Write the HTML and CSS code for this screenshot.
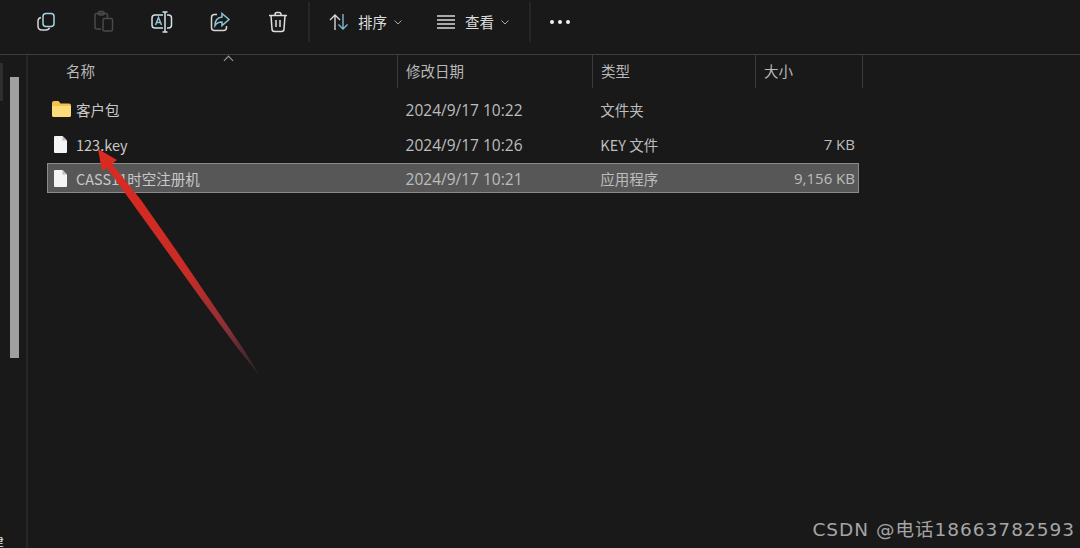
FILE: index.html
```html
<!DOCTYPE html>
<html lang="zh-CN">
<head>
    <meta charset="UTF-8">
    <title>文件资源管理器</title>
    <link rel="stylesheet" href="styles.css">
</head>
<body>
    <div class="toolbar">
        <div class="tool-group">
            <button class="tool-icon">
                <svg width="22" height="22" viewBox="0 0 22 22" fill="none" stroke="#d6d6d6" stroke-width="1.500">
                    <rect x="8" y="2.500" width="11" height="13" rx="3" stroke="#a9d2e4"/>
                    <path d="M6 6.500c-2 .4-3 1.600-3 3.500v5c0 2.500 1.500 4 4 4h4c1.700 0 3-.8 3.500-2.200"/>
                </svg>
            </button>
            <button class="tool-icon">
                <svg width="22" height="24" viewBox="0 0 22 24" fill="none" stroke="#4a4a4a" stroke-width="1.500">
                    <path d="M8 19H3.500A1.500 1.500 0 0 1 2 17.500V5a1.500 1.500 0 0 1 1.500-1.500H13A1.500 1.500 0 0 1 14.500 5v3"/>
                    <rect x="5.500" y="1.500" width="5.500" height="3.500" rx="1"/>
                    <rect x="10" y="8.500" width="9.500" height="12.500" rx="1.500"/>
                </svg>
            </button>
            <button class="tool-icon">
                <svg width="24" height="24" viewBox="0 0 24 24" fill="none" stroke="#cfe3ea" stroke-width="1.500">
                    <path d="M13 5H5a3 3 0 0 0-3 3v7a3 3 0 0 0 3 3h8"/>
                    <path d="M17 5h1.500a3 3 0 0 1 3 3v7a3 3 0 0 1-3 3H17"/>
                    <path d="M15 2v20M12.500 2h5M12.500 22h5"/>
                    <path d="M5.500 15l3-7.500 3 7.500M6.700 12.500h3.600" stroke="#8fc3d8"/>
                </svg>
            </button>
            <button class="tool-icon">
                <svg width="22" height="22" viewBox="0 0 22 22" fill="none" stroke="#d6d6d6" stroke-width="1.500">
                    <path d="M8 3.500H5.500a3 3 0 0 0-3 3v10a3 3 0 0 0 3 3h9a3 3 0 0 0 3-3V15"/>
                    <path d="M13 2.500l7 6-7 6v-3.500c-3 0-5.500 1-7 3.500 0-4.500 2.500-8 7-8.500z" stroke="#8fc3d8"/>
                </svg>
            </button>
            <button class="tool-icon">
                <svg width="20" height="22" viewBox="0 0 20 22" fill="none" stroke="#dedede" stroke-width="1.500">
                    <path d="M1 4.500h18M7 4.500V3.500a2 2 0 0 1 2-2h2a2 2 0 0 1 2 2v1"/>
                    <path d="M3 4.500l1 13.500a2.500 2.500 0 0 0 2.500 2.500h7A2.500 2.500 0 0 0 16 18l1-13.500"/>
                    <path d="M8 9v7M12 9v7"/>
                </svg>
            </button>
        </div>
        <div class="tool-sep"></div>
        <div class="tool-group tool-menus">
            <button class="tool-menu">
                <svg width="20" height="18" viewBox="0 0 20 18" fill="none" stroke-width="1.400">
                    <path d="M6 17V2M1 7l5-5 5 5" stroke="#d6d6d6"/>
                    <path d="M14 1v15M9.500 11.500l4.500 4.500 4.500-4.500" stroke="#7fb8d2"/>
                </svg>
                <span>排序</span>
                <svg class="chev" width="8" height="5" viewBox="0 0 8 5" fill="none" stroke="#a8a8a8"><path d="M.5.500 4 4 7.500.500"/></svg>
            </button>
            <button class="tool-menu">
                <svg width="20" height="14" viewBox="0 0 20 14" fill="none" stroke="#d8d8d8" stroke-width="1.300">
                    <path d="M1 1h18M1 5h18M1 9h18M1 13h18"/>
                </svg>
                <span>查看</span>
                <svg class="chev" width="8" height="5" viewBox="0 0 8 5" fill="none" stroke="#a8a8a8"><path d="M.5.500 4 4 7.500.500"/></svg>
            </button>
        </div>
        <div class="tool-sep sep-more"></div>
        <div class="more"><i></i><i></i><i></i></div>
    </div>

    <div class="main">
        <div class="nav">
            <div class="nav-thumb"></div>
            <div class="scroll-thumb"></div>
            <div class="nav-clip">建</div>
        </div>
        <div class="files">
            <div class="file-head">
                <div class="col-name">名称<span class="sort-caret"></span></div>
                <div class="col-date">修改日期</div>
                <div class="col-type">类型</div>
                <div class="col-size">大小</div>
            </div>
            <div class="file-row">
                <div class="col-name">
                    <svg width="19" height="16" viewBox="0 0 19 16"><path d="M0 2a2 2 0 0 1 2-2h4.500l2 2.500H17a2 2 0 0 1 2 2V14a2 2 0 0 1-2 2H2a2 2 0 0 1-2-2z" fill="#f0c24f"/><path d="M0 5h19v9a2 2 0 0 1-2 2H2a2 2 0 0 1-2-2z" fill="#fbdc79"/></svg>
                    <span>客户包</span>
                </div>
                <div class="col-date">2024/9/17 10:22</div>
                <div class="col-type">文件夹</div>
                <div class="col-size"></div>
            </div>
            <div class="file-row">
                <div class="col-name">
                    <svg class="doc" width="13" height="17" viewBox="0 0 13 17"><path d="M0 1a1 1 0 0 1 1-1h7.500L13 4.500V16a1 1 0 0 1-1 1H1a1 1 0 0 1-1-1z" fill="#f4f4f4"/><path d="M8.500 0v4.500H13z" fill="#bdbdbd"/></svg>
                    <span>123.key</span>
                </div>
                <div class="col-date">2024/9/17 10:26</div>
                <div class="col-type">KEY 文件</div>
                <div class="col-size">7 KB</div>
            </div>
            <div class="file-row selected">
                <div class="col-name">
                    <svg class="doc" width="13" height="17" viewBox="0 0 13 17"><path d="M0 1a1 1 0 0 1 1-1h7.500L13 4.500V16a1 1 0 0 1-1 1H1a1 1 0 0 1-1-1z" fill="#f4f4f4"/><path d="M8.500 0v4.500H13z" fill="#bdbdbd"/></svg>
                    <span>CASS11时空注册机</span>
                </div>
                <div class="col-date">2024/9/17 10:21</div>
                <div class="col-type">应用程序</div>
                <div class="col-size">9,156 KB</div>
            </div>
        </div>
    </div>

    <svg class="arrow" width="180" height="245" viewBox="0 0 180 245">
        <defs>
            <linearGradient id="tail" gradientUnits="userSpaceOnUse" x1="8" y1="7" x2="170" y2="235">
                <stop offset="0" stop-color="#dc2a20"/>
                <stop offset=".55" stop-color="#c82c26"/>
                <stop offset=".8" stop-color="#8a3038"/>
                <stop offset="1" stop-color="#4a3038" stop-opacity=".4"/>
            </linearGradient>
        </defs>
        <path d="M8 8 L27 19 L22 23 L51 59 L86 109 L120 159 L154 209 L170 235 L149 209 L112 159 L76 109 L40 59 L17 27 L12 30 Z" fill="url(#tail)"/>
    </svg>

    <div class="watermark">CSDN @电话18663782593</div>
</body>
</html>
```

FILE: styles.css
```css
* {
    box-sizing: border-box;
}

html, body {
    height: 100%;
}

body {
    margin: 0;
    position: relative;
    overflow: hidden;
    display: flex;
    flex-direction: column;
    background-color: #191919;
    color: #d0d0d0;
    font-family: "Noto Sans CJK SC", "Liberation Sans", sans-serif;
    font-size: 14.5px;
}

button {
    background: none;
    border: none;
    padding: 0;
    color: inherit;
    font: inherit;
}

.toolbar {
    display: flex;
    align-items: center;
    height: 55px;
    flex-shrink: 0;
    padding: 0 0 10px 34px;
    border-bottom: 1px solid #3d3d3d;
}

.tool-group {
    display: flex;
    align-items: center;
    gap: 34px;
}

.tool-icon {
    display: flex;
    align-items: center;
    justify-content: center;
    width: 24px;
    height: 24px;
}

.tool-sep {
    width: 2px;
    height: 40px;
    margin-left: 18px;
    background-color: #262626;
}

.tool-menus {
    gap: 34px;
    margin-left: 19px;
}

.tool-menu {
    display: flex;
    align-items: center;
    gap: 9px;
    color: #dcdcdc;
}

.tool-menu span {
    margin-bottom: 1px;
}

.chev {
    margin-left: -2px;
}

.sep-more {
    margin-left: 20px;
}

.more {
    display: flex;
    gap: 4px;
    margin-left: 19px;
}

.more i {
    width: 4px;
    height: 4px;
    border-radius: 50%;
    background-color: #f2f2f2;
}

.main {
    display: flex;
    flex: 1;
}

.nav {
    position: relative;
    width: 28px;
    flex-shrink: 0;
    overflow: hidden;
    border-right: 2px solid #262626;
}

.nav-thumb {
    position: absolute;
    left: 0;
    top: 8px;
    width: 3px;
    height: 38px;
    background-color: #2e2e2e;
}

.scroll-thumb {
    position: absolute;
    left: 10px;
    top: 22px;
    width: 9px;
    height: 281px;
    background-color: #a0a0a0;
}

.nav-clip {
    position: absolute;
    left: -10px;
    bottom: -4px;
    color: #e6e6e6;
    font-size: 14px;
}

.files {
    width: 836px;
    padding-left: 19px;
}

.file-head {
    display: flex;
    height: 33px;
    color: #b8b8b8;
}

.file-head > div {
    position: relative;
    display: flex;
    align-items: center;
    border-right: 1px solid #3a3a3a;
    padding-bottom: 2px;
}

.col-name {
    width: 351px;
    padding-left: 19px;
}

.col-date {
    width: 195px;
    padding-left: 8px;
}

.col-type {
    width: 163px;
    padding-left: 8px;
}

.col-size {
    width: 107px;
    padding-left: 8px;
}

.sort-caret {
    position: absolute;
    left: 178px;
    top: 2px;
    width: 7px;
    height: 7px;
    border-left: 1px solid #a0a0a0;
    border-top: 1px solid #a0a0a0;
    transform: rotate(45deg);
}

.file-row {
    display: flex;
    align-items: center;
    height: 34px;
    width: 812px;
    color: #bdbdbd;
}

.file-head + .file-row {
    margin-top: 4px;
}

.file-head + .file-row + .file-row {
    margin-top: 1px;
}

.file-row .col-name {
    display: flex;
    align-items: center;
    gap: 5px;
    padding-left: 5px;
    color: #c8c8c8;
}

.file-row .doc {
    margin-left: 2px;
    margin-right: 4px;
}

.file-row .col-date {
    padding-top: 1px;
    font-family: "Open Sans", sans-serif;
    font-size: 15.5px;
}

.file-row .col-size {
    width: 104px;
    padding: 0 4px 0 0;
    text-align: right;
    font-family: "Open Sans", sans-serif;
    font-size: 15px;
}

.selected {
    height: 30px;
    margin-top: 2px;
    background-color: #575757;
    box-shadow: inset 0 0 0 1px #8a8a8a;
}

.arrow {
    position: absolute;
    left: 90px;
    top: 141px;
}

.watermark {
    position: absolute;
    right: 5px;
    bottom: 7px;
    font-family: "DejaVu Sans", "Noto Sans CJK SC", sans-serif;
    font-size: 18.5px;
    letter-spacing: 1px;
    color: #a5a5a5;
}
```
